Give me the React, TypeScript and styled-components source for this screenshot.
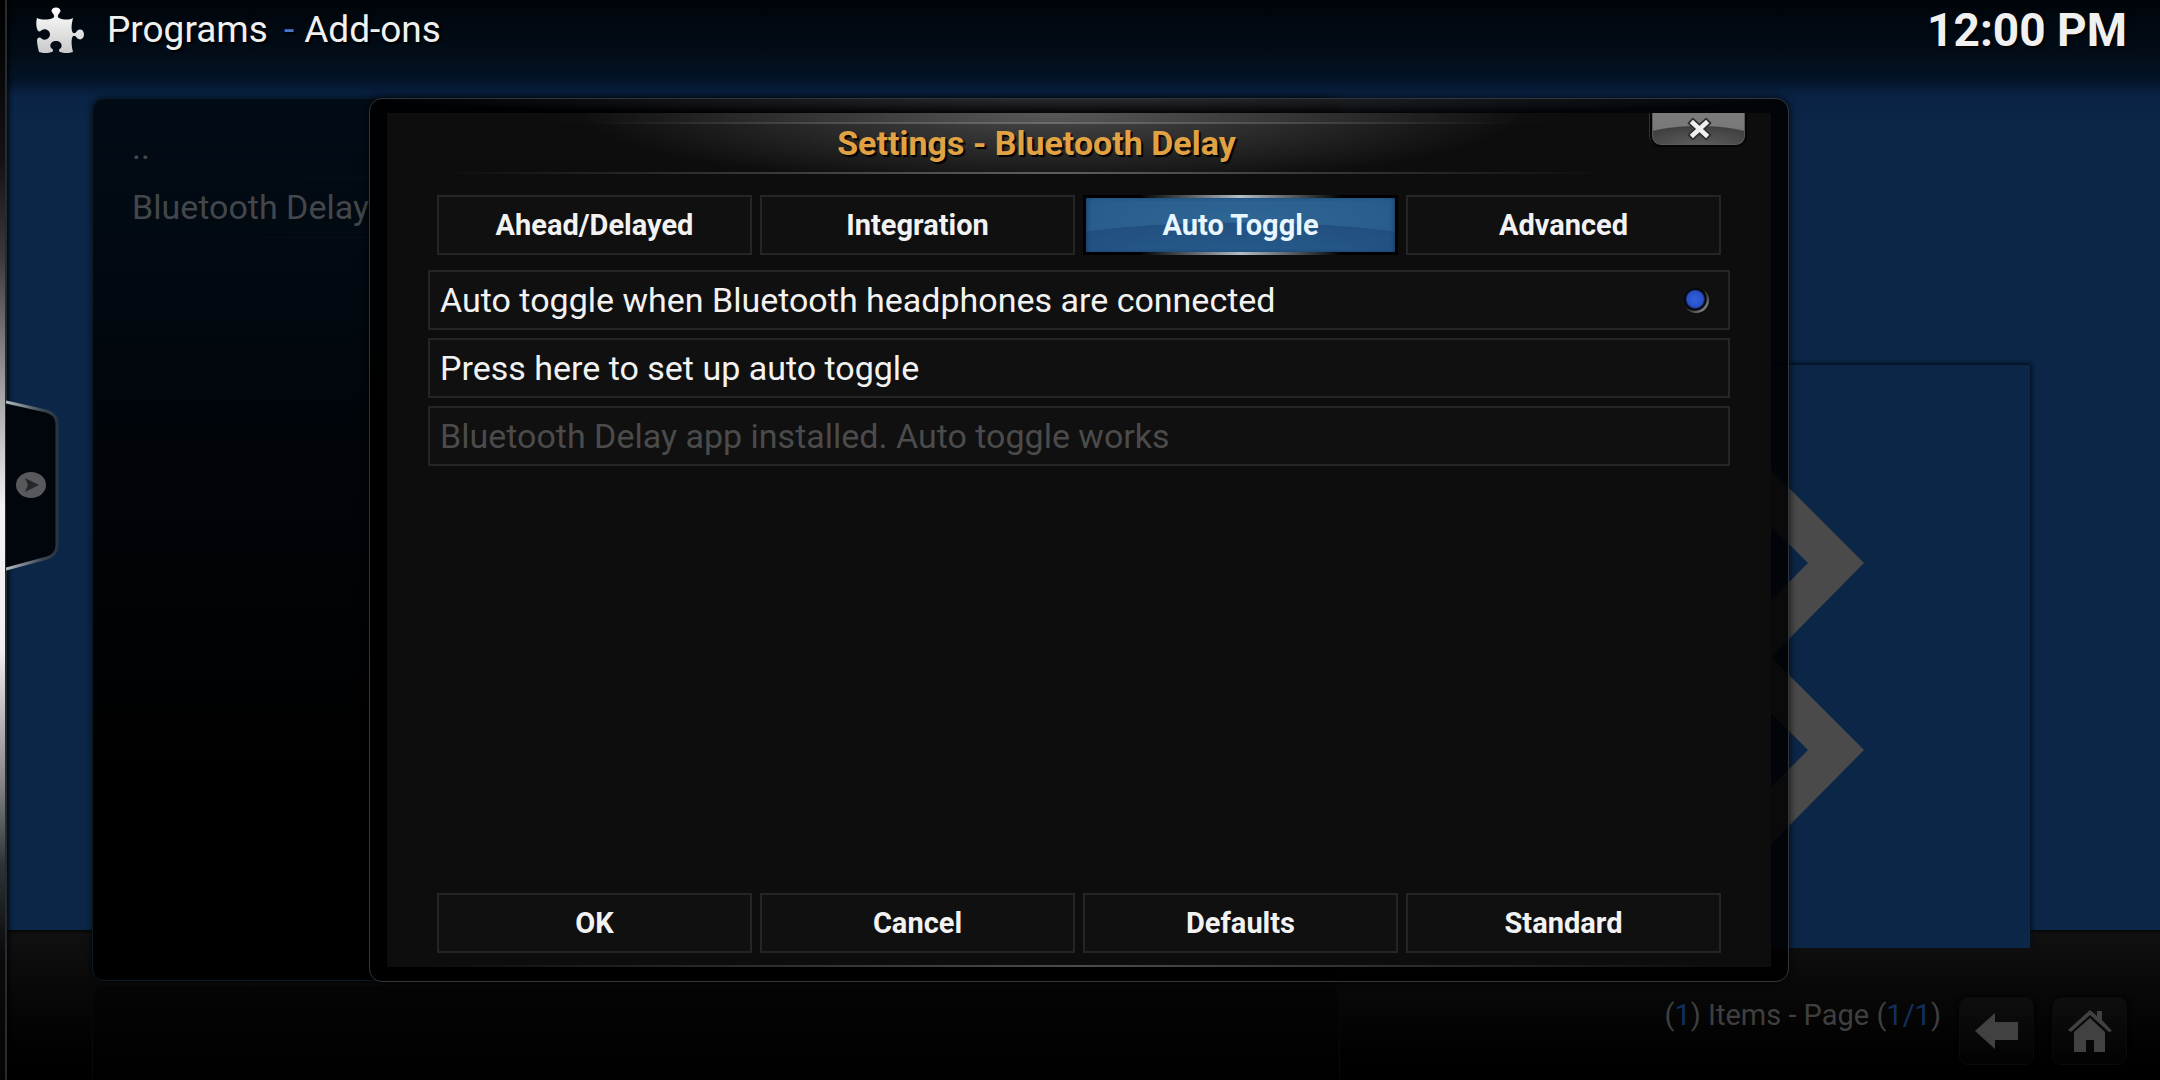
import React, { useState } from "react";
import styled, { createGlobalStyle, css } from "styled-components";

const GlobalStyle = createGlobalStyle`
  *, *::before, *::after { box-sizing: border-box; }
  body {
    margin: 0;
    background: #000;
    color: #f0f0f0;
    font-family: Roboto, "Liberation Sans", sans-serif;
  }
  button { font-family: inherit; cursor: pointer; }
  h1, h2, p, ul { margin: 0; padding: 0; }
`;

const Screen = styled.div`
  position: relative;
  display: flex;
  flex-direction: column;
  min-height: 100vh;
  background:
    linear-gradient(to bottom, #000409 0, #020d18 54px, rgba(2, 17, 34, 0.85) 80px, rgba(8, 32, 66, 0.5) 96px, rgba(11, 38, 71, 0) 122px),
    linear-gradient(to top, #000 0, #000 22px, #070707 80px, #101010 146px, #050505 150px, #0b2647 150px);
`;

const Header = styled.header`
  display: flex;
  align-items: flex-start;
  height: 98px;
  padding: 6px 33px 0 36px;
  text-shadow: 2px 2px 2px #000;
`;

const Crumbs = styled.h1`
  flex: 1;
  display: flex;
  gap: 10px;
  margin-left: 22px;
  font-size: 37px;
  line-height: 48px;
  font-weight: 400;
`;

const Section = styled.span`
  margin-right: 6px;
`;

const Dash = styled.span`
  color: #4a76c4;
`;

const Clock = styled.time`
  font-size: 46px;
  line-height: 48px;
  font-weight: 700;
`;

const Main = styled.main`
  flex: 1;
  display: grid;
  grid-template-columns: 1248fr 690fr;
  padding: 0 130px 0 92px;
`;

const Panel = styled.section`
  border: 1px solid #0d1a24;
  border-radius: 12px;
  background: linear-gradient(to bottom, #020c16, #01050a 40%, #000 75%);
  box-shadow: 0 0 6px rgba(0, 0, 0, 0.7);
`;

const FileList = styled.ul`
  list-style: none;
  padding: 19px 0 0 39px;
  font-size: 34px;
  line-height: 59px;
  color: #43474b;
`;

const FileItem = styled.li`
  border-bottom: 1px solid transparent;
  border-image: linear-gradient(to right, transparent, #0b141c 40%) 1;
`;

const Preview = styled.aside`
  align-self: end;
  display: flex;
  justify-content: flex-end;
  height: 583px;
  margin-bottom: 33px;
  padding: 105px 166px 0 0;
  background: #0b2647;
  box-shadow: 1px 0 6px #03101f, 0 -1px 3px #03101f;
  clip-path: inset(-6px -6px 0 0);
  svg { flex: none; }
`;

const Footer = styled.footer`
  display: grid;
  grid-template-columns: 1248px 1fr;
  height: 99px;
  padding: 4px 33px 0 92px;
`;

const FooterPanel = styled.div`
  border: 1px solid #090909;
  border-bottom: 0;
  border-radius: 12px 12px 0 0;
  background: linear-gradient(to bottom, #050505, #000);
`;

const Status = styled.div`
  display: flex;
  justify-content: flex-end;
  align-items: flex-start;
  gap: 18px;
  padding-top: 12px;
`;

const PageInfo = styled.p`
  font-size: 29px;
  line-height: 36px;
  color: #3f3f3f;
  b { font-weight: 400; color: #12305f; }
`;

const NavButton = styled.button`
  display: grid;
  place-items: center;
  width: 75px;
  height: 68px;
  padding: 0;
  border: 1px solid #0b0b0b;
  border-radius: 9px;
  background: linear-gradient(to bottom, #0e0e0e, #020202);
  box-shadow: 0 0 4px #000;
`;

const EdgeBar = styled.div`
  position: absolute;
  top: 0;
  bottom: 0;
  left: 0;
  width: 7px;
  border-right: 2px solid #252b2e;
  background: linear-gradient(to bottom, #000 0, #141214 15%, #3b393b 24%, #a0a0a0 36%, #f2f2f2 47%, #f0f0f0 60%, #8a8a8a 72%, #2d3438 80%, #0c0a0c 88%, #050505 100%);
  box-shadow: 2px 0 4px rgba(0, 0, 0, 0.8);
`;

const DrawerButton = styled.button`
  position: absolute;
  left: 6px;
  top: 50%;
  margin-top: -142px;
  padding: 0;
  border: 0;
  background: none;
  svg { display: block; }
`;

const Overlay = styled.div`
  position: absolute;
  inset: 0;
  display: flex;
  padding: 98px 371px 98px 369px;
`;

const Dialog = styled.div`
  flex: 1;
  display: flex;
  padding: 14px 17px;
  border: 1px solid #30363a;
  border-radius: 13px;
  background:
    radial-gradient(ellipse 50% 16px at 50% 0, rgba(60, 58, 60, 0.7), transparent),
    rgba(0, 0, 0, 0.86);
  box-shadow: 0 0 6px 2px rgba(0, 0, 0, 0.55);
`;

const DialogInner = styled.div`
  flex: 1;
  display: flex;
  flex-direction: column;
  padding-bottom: 14px;
  background:
    linear-gradient(to right, transparent 3%, #4c4c4c 50%, transparent 97%) bottom / 100% 2px no-repeat,
    #0d0d0d;
`;

const TitleBar = styled.div`
  display: flex;
  align-items: flex-start;
  height: 61px;
  padding: 0 26px 0 34px;
  background:
    linear-gradient(to right, transparent 14%, #6c6c6c 48%, transparent 82%) 0 9px / 100% 2px no-repeat,
    linear-gradient(to right, transparent 4%, #5e5e5e 48%, transparent 88%) bottom / 100% 2px no-repeat,
    linear-gradient(to right, transparent 10%, rgba(255, 255, 255, 0.09) 48%, transparent 86%) top / 100% 9px no-repeat,
    radial-gradient(ellipse 34% 120% at 48% 0, #484848, #2b2b2b 50%, #0d0d0d 100%);
`;

const Title = styled.h2`
  flex: 1;
  text-align: center;
  font-size: 34px;
  line-height: 60px;
  font-weight: 700;
  color: #e0a243;
  text-shadow: 2px 2px 1px #000;
`;

const CloseButton = styled.button`
  display: grid;
  place-items: center;
  width: 93px;
  height: 32px;
  padding: 0;
  border: 1px solid #5a5a5a;
  border-top: 0;
  border-radius: 0 0 9px 9px;
  background:
    radial-gradient(ellipse 75% 60% at 50% 100%, #5c5c5c 0, #404040 94%, transparent 100%),
    linear-gradient(to bottom, #7c7c7c, #757575);
  box-shadow: 0 0 0 2px #050505, -3px 0 0 0 #333;
`;

const ButtonRow = styled.div`
  display: grid;
  grid-template-columns: repeat(4, 1fr);
  gap: 8px;
  padding: 0 50px;
`;

const TabRow = styled(ButtonRow)`
  margin: 21px 0 15px;
`;

const box = css`
  height: 60px;
  border: 2px solid #252525;
  background: #101010;
  color: #f2f2f2;
`;

const PanelButton = styled.button<{ $active?: boolean }>`
  ${box}
  padding: 0 8px;
  font-size: 29px;
  line-height: 36px;
  font-weight: 700;
  ${(p) =>
    p.$active &&
    css`
      border: 3px solid transparent;
      background:
        radial-gradient(ellipse 70% 55% at 50% 100%, #265b8a 0, #214f80 98%, transparent 100%) padding-box,
        radial-gradient(ellipse at 50% 40%, #2f6694, #26598a) padding-box,
        linear-gradient(to right, #000 18%, #b4bec6 50%, #000 82%) border-box;
      box-shadow: inset 3px 0 4px -2px #163a60, inset -3px 0 4px -2px #163a60;
      color: #e8f6ff;
    `}
`;

const Settings = styled.div`
  flex: 1;
  display: flex;
  flex-direction: column;
  gap: 8px;
  padding: 0 41px;
`;

const row = css`
  ${box}
  display: flex;
  align-items: center;
  justify-content: space-between;
  padding: 0 19px 0 10px;
  font-size: 34px;
  line-height: 40px;
  font-weight: 400;
  text-align: left;
`;

const ToggleRow = styled.label`
  ${row}
`;

const ActionRow = styled.button`
  ${row}
  &:disabled { color: #4b4b4b; }
`;

const Toggle = styled.input`
  appearance: none;
  flex: none;
  width: 26px;
  height: 26px;
  margin: 0;
  border-radius: 50%;
  background: radial-gradient(circle, #080808 0 10px, transparent 11px), linear-gradient(135deg, #0c0c0c 45%, #a8a8a8);
  &:checked {
    background:
      radial-gradient(circle at 47% 47%, #2f62dc 0, #2850c8 8px, #05070c 10px, #05070c 11px, transparent 12px),
      linear-gradient(135deg, #141414 45%, #a8a8a8);
  }
`;

function PuzzleIcon() {
  return (
    <svg width="49" height="47" viewBox="0 0 49 47" aria-hidden="true">
      <defs>
        <linearGradient id="puzzle" x1="0" y1="0" x2="0" y2="1">
          <stop offset="0" stopColor="#fff" />
          <stop offset="1" stopColor="#c9c9c9" />
        </linearGradient>
      </defs>
      <path
        fill="url(#puzzle)"
        d="M1 12C6 14 12 14 17 12C19 11 18 9 17 7.500C14 5 16 1.500 20 1.500S26 5 23 7.500C22 9 21 11 23 12C28 14 33 14 37 12C36 17 35 21 36 25C37 28 39 28 41 25C44 22 48 24 48 28.500S44 35 41 32C39 29 37 29 36 32C35 37 36 42 37 46C33 47.500 28 47.500 24 46C22 45 23 43 25 42C27 38 24 35 20 35S13 38 15 42C17 43 18 45 16 46C12 47.500 7 47.500 3 46C2 42 1 38 1 34C2 31 4 31 6 33C10 35 14 32 14 28.500S10 22 6 24C4 26 2 26 1 23C0 19 0 15 1 12z"
      />
    </svg>
  );
}

function Chevrons() {
  return (
    <svg width="149" height="374" viewBox="0 0 149 374" fill="#4a4a4a" aria-hidden="true">
      <path d="M149 93 56 0H0l93 93L0 187h56z" />
      <path d="M149 280 56 187H0l93 93L0 374h56z" />
    </svg>
  );
}

function DrawerHandle() {
  return (
    <svg width="56" height="174" viewBox="0 0 56 174" aria-hidden="true">
      <defs>
        <linearGradient id="rim" x1="0" y1="0" x2="1" y2="0">
          <stop offset="0" stopColor="#b4bcc2" />
          <stop offset="0.7" stopColor="#3c4854" />
          <stop offset="1" stopColor="#283440" />
        </linearGradient>
      </defs>
      <path
        d="M0 4 40 13Q51 16 51 26V147Q51 157 41 160L0 171"
        fill="#01060c"
        stroke="url(#rim)"
        strokeWidth="3"
      />
      <ellipse cx="25" cy="87" rx="15" ry="13" fill="#58595c" />
      <path d="M19 80 33 87 19 94 22 87z" fill="#25272a" />
    </svg>
  );
}

function CloseIcon() {
  return (
    <svg width="28" height="22" viewBox="0 0 28 22" aria-hidden="true">
      <g fill="none" strokeLinecap="square">
        <path d="M8 5 21 17M21 5 8 17" stroke="#303030" strokeWidth="8" />
        <path d="M8 5 21 17M21 5 8 17" stroke="#f0f0f0" strokeWidth="4.500" />
      </g>
    </svg>
  );
}

function BackIcon() {
  return (
    <svg width="44" height="36" viewBox="0 0 44 36" aria-hidden="true">
      <path d="M0 18 20 0V9H43V27H20V36z" fill="#414141" />
    </svg>
  );
}

function HomeIcon() {
  return (
    <svg width="44" height="42" viewBox="0 0 44 42" fill="#414141" aria-hidden="true">
      <path d="M22 0 29 6V1H34V10L44 21 41 22 22 5 3 22 0 20z" />
      <path d="M22 8 37 22V42H26V30H18V42H6V22z" />
    </svg>
  );
}

const tabs = ["Ahead/Delayed", "Integration", "Auto Toggle", "Advanced"];
const actions = ["OK", "Cancel", "Defaults", "Standard"];
const files = ["..", "Bluetooth Delay"];

export default function App() {
  const [tab, setTab] = useState("Auto Toggle");
  const [auto, setAuto] = useState(true);

  return (
    <Screen>
      <GlobalStyle />
      <Header>
        <PuzzleIcon />
        <Crumbs>
          <Section>Programs</Section>
          <Dash>-</Dash>
          <span>Add-ons</span>
        </Crumbs>
        <Clock>12:00 PM</Clock>
      </Header>

      <Main>
        <Panel>
          <FileList>
            {files.map((name) => (
              <FileItem key={name}>{name}</FileItem>
            ))}
          </FileList>
        </Panel>
        <Preview>
          <Chevrons />
        </Preview>
      </Main>

      <Footer>
        <FooterPanel />
        <Status>
          <PageInfo>
            (<b>1</b>) Items - Page (<b>1/1</b>)
          </PageInfo>
          <NavButton aria-label="Back">
            <BackIcon />
          </NavButton>
          <NavButton aria-label="Home">
            <HomeIcon />
          </NavButton>
        </Status>
      </Footer>

      <EdgeBar />
      <DrawerButton aria-label="Open side menu">
        <DrawerHandle />
      </DrawerButton>

      <Overlay>
        <Dialog role="dialog" aria-labelledby="dialog-title">
          <DialogInner>
            <TitleBar>
              <Title id="dialog-title">Settings - Bluetooth Delay</Title>
              <CloseButton aria-label="Close">
                <CloseIcon />
              </CloseButton>
            </TitleBar>
            <TabRow role="tablist">
              {tabs.map((name) => (
                <PanelButton
                  key={name}
                  role="tab"
                  aria-selected={name === tab}
                  $active={name === tab}
                  onClick={() => setTab(name)}
                >
                  {name}
                </PanelButton>
              ))}
            </TabRow>
            <Settings>
              <ToggleRow>
                Auto toggle when Bluetooth headphones are connected
                <Toggle type="checkbox" checked={auto} onChange={() => setAuto(!auto)} />
              </ToggleRow>
              <ActionRow>Press here to set up auto toggle</ActionRow>
              <ActionRow disabled>Bluetooth Delay app installed. Auto toggle works</ActionRow>
            </Settings>
            <ButtonRow>
              {actions.map((name) => (
                <PanelButton key={name}>{name}</PanelButton>
              ))}
            </ButtonRow>
          </DialogInner>
        </Dialog>
      </Overlay>
    </Screen>
  );
}
